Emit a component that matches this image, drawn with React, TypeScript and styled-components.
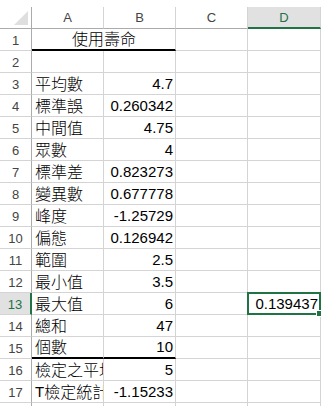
import React from 'react';
import styled, { createGlobalStyle, css } from 'styled-components';

const GlobalStyle = createGlobalStyle`
  html, body {
    margin: 0;
    padding: 0;
    background: #fff;
    overflow: hidden;
  }
`;

const GREEN = '#217346';
const GRID = '#d4d4d4';

const Sheet = styled.div`
  display: grid;
  grid-template-columns: 32px 72px 72px 72px 73px;
  grid-auto-rows: 22px;
  padding-top: 7px;
  width: 321px;
`;

const Corner = styled.div`
  display: flex;
  align-items: flex-end;
  justify-content: flex-end;
  padding: 0 3px 3px 0;
  border-right: 1px solid #ababab;
  border-bottom: 1px solid #ababab;
  box-sizing: border-box;
`;

const CornerTriangle = styled.div`
  width: 0;
  height: 0;
  border-left: 14px solid transparent;
  border-bottom: 14px solid #dfdfdf;
`;

const ColHeader = styled.div<{ $active?: boolean }>`
  display: flex;
  align-items: center;
  justify-content: center;
  font-family: 'Liberation Sans', Arial, sans-serif;
  font-size: 13px;
  color: #444;
  border-right: 1px solid ${GRID};
  border-bottom: 1px solid #ababab;
  box-sizing: border-box;
  ${(p) =>
    p.$active &&
    css`
      background: #e1e1e1;
      color: ${GREEN};
      border-bottom: 2px solid ${GREEN};
    `}
`;

const RowHeader = styled.div<{ $active?: boolean }>`
  display: flex;
  align-items: center;
  justify-content: center;
  font-family: 'Liberation Sans', Arial, sans-serif;
  font-size: 13px;
  color: #444;
  padding-top: 1px;
  border-right: 1px solid #ababab;
  border-bottom: 1px solid ${GRID};
  box-sizing: border-box;
  ${(p) =>
    p.$active &&
    css`
      background: #e1e1e1;
      color: ${GREEN};
      border-right: 2px solid ${GREEN};
    `}
`;

const Cell = styled.div<{
  $align?: 'left' | 'right' | 'center';
  $span?: number;
  $under?: boolean;
  $selected?: boolean;
  $clip?: boolean;
}>`
  position: relative;
  display: flex;
  align-items: flex-end;
  justify-content: ${(p) => (p.$align === 'right' ? 'flex-end' : p.$align === 'center' ? 'center' : 'flex-start')};
  grid-column: span ${(p) => p.$span ?? 1};
  padding: 0 2px 2px 3px;
  font-family: 'Noto Sans CJK TC', 'Liberation Sans', sans-serif;
  font-weight: 300;
  font-size: 16px;
  line-height: 18px;
  color: #000;
  white-space: nowrap;
  overflow: ${(p) => (p.$clip ? 'hidden' : 'visible')};
  border-right: 1px solid ${GRID};
  border-bottom: ${(p) => (p.$under ? '2px solid #000' : `1px solid ${GRID}`)};
  box-sizing: border-box;
  ${(p) =>
    p.$selected &&
    css`
      &::after {
        content: '';
        position: absolute;
        left: -1px;
        top: -1px;
        right: -1px;
        bottom: -1px;
        border: 2px solid ${GREEN};
      }
      &::before {
        content: '';
        position: absolute;
        right: -3px;
        bottom: -3px;
        width: 5px;
        height: 5px;
        background: ${GREEN};
        border: 1px solid #fff;
        z-index: 1;
      }
    `}
`;

const Num = styled.span`
  font-family: 'Liberation Sans', Arial, sans-serif;
  font-weight: 400;
  font-size: 15px;
  line-height: 17px;
`;

type Row = { label: string; value?: string };

const rows: Row[] = [
  { label: '' },
  { label: '平均數', value: '4.7' },
  { label: '標準誤', value: '0.260342' },
  { label: '中間值', value: '4.75' },
  { label: '眾數', value: '4' },
  { label: '標準差', value: '0.823273' },
  { label: '變異數', value: '0.677778' },
  { label: '峰度', value: '-1.25729' },
  { label: '偏態', value: '0.126942' },
  { label: '範圍', value: '2.5' },
  { label: '最小值', value: '3.5' },
  { label: '最大值', value: '6' },
  { label: '總和', value: '47' },
  { label: '個數', value: '10' },
  { label: '檢定之平均值', value: '5' },
  { label: 'T檢定統計量', value: '-1.15233' },
];

export default function App() {
  return (
    <>
      <GlobalStyle />
      <Sheet>
        <Corner>
          <CornerTriangle />
        </Corner>
        <ColHeader>A</ColHeader>
        <ColHeader>B</ColHeader>
        <ColHeader>C</ColHeader>
        <ColHeader $active>D</ColHeader>

        <RowHeader>1</RowHeader>
        <Cell $span={2} $align="center" $under>
          使用壽命
        </Cell>
        <Cell />
        <Cell />

        {rows.map((row, i) => {
          const n = i + 2;
          return (
            <React.Fragment key={n}>
              <RowHeader $active={n === 13}>{n}</RowHeader>
              <Cell $under={n === 15} $clip={n >= 16}>
                {row.label.startsWith('T') ? (
                  <>
                    <Num>T</Num>
                    {row.label.slice(1)}
                  </>
                ) : (
                  row.label
                )}
              </Cell>
              <Cell $align="right" $under={n === 15}>
                {row.value && <Num>{row.value}</Num>}
              </Cell>
              <Cell />
              <Cell $align="right" $selected={n === 13}>
                {n === 13 && <Num>0.139437</Num>}
              </Cell>
            </React.Fragment>
          );
        })}

        {/* row 18 only peeks in at the bottom edge */}
        <RowHeader />
        <Cell />
        <Cell />
        <Cell />
        <Cell />
      </Sheet>
    </>
  );
}
